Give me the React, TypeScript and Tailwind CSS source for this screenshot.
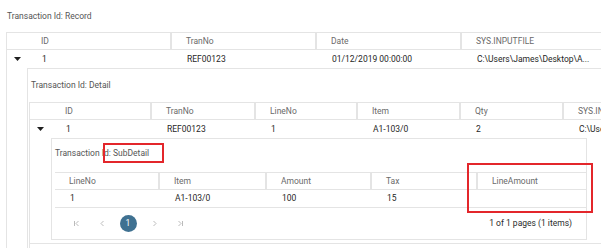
import React from "react"

const line = "border-[#e4e4e4]"

function CaretDown() {
  return (
    <svg width="7" height="4" viewBox="0 0 7 4">
      <path d="M0 0h7L3.5 4z" fill="#1f1f1f" />
    </svg>
  )
}

function CaretRight() {
  return (
    <svg width="4" height="7" viewBox="0 0 4 7">
      <path d="M0 0v7L4 3.5z" fill="#1f1f1f" />
    </svg>
  )
}

type Col = { w: string; label: string; value: string }

function HeaderRow({ cols, lead }: { cols: Col[]; lead?: string }) {
  return (
    <div className={`flex h-[18px] border-y ${line} text-[#6a6a6a]`}>
      {lead && <div className={lead} />}
      {cols.map((c, i) => (
        <div
          key={i}
          className={`${c.w} shrink-0 flex items-center pl-[14px] whitespace-nowrap overflow-hidden ${
            i < cols.length - 1 ? `border-r-2 ${line}` : ""
          }`}
        >
          {c.label}
        </div>
      ))}
    </div>
  )
}

function DataRow({
  cols,
  lead,
  caret,
  border = true,
}: {
  cols: Col[]
  lead?: string
  caret?: React.ReactNode
  border?: boolean
}) {
  return (
    <div className={`flex h-[18px] text-[#262626] ${border ? `border-b ${line}` : ""}`}>
      {lead && <div className={`${lead} flex items-center justify-center`}>{caret}</div>}
      {cols.map((c, i) => (
        <div
          key={i}
          className={`${c.w} shrink-0 flex items-center pl-[15px] whitespace-nowrap overflow-hidden`}
        >
          {c.value}
        </div>
      ))}
    </div>
  )
}

const recordCols: Col[] = [
  { w: "w-[145px]", label: "ID", value: "1" },
  { w: "w-[145px]", label: "TranNo", value: "REF00123" },
  { w: "w-[145px]", label: "Date", value: "01/12/2019 00:00:00" },
  { w: "w-[145px]", label: "SYS.INPUTFILE", value: "C:\\Users\\James\\Desktop\\A..." },
]

const detailCols: Col[] = [
  { w: "w-[101px]", label: "ID", value: "1" },
  { w: "w-[104px]", label: "TranNo", value: "REF00123" },
  { w: "w-[102px]", label: "LineNo", value: "1" },
  { w: "w-[103px]", label: "Item", value: "A1-103/0" },
  { w: "w-[103px]", label: "Qty", value: "2" },
  { w: "w-[103px]", label: "SYS.INPUTFILE", value: "C:\\Users\\James" },
]

const detailCols2: Col[] = [
  { w: "w-[101px]", label: "", value: "1" },
  { w: "w-[104px]", label: "", value: "REF00123" },
  { w: "w-[102px]", label: "", value: "2" },
  { w: "w-[103px]", label: "", value: "A1-101/0" },
  { w: "w-[103px]", label: "", value: "1" },
  { w: "w-[103px]", label: "", value: "C:\\Users\\James" },
]

const subCols: Col[] = [
  { w: "w-[105px]", label: "LineNo", value: "1" },
  { w: "w-[107px]", label: "Item", value: "A1-103/0" },
  { w: "w-[105px]", label: "Amount", value: "100" },
  { w: "w-[106px]", label: "Tax", value: "15" },
  { w: "w-[108px]", label: "LineAmount", value: "" },
]

function PagerIcon({ d }: { d: string }) {
  return (
    <svg width="7" height="7" viewBox="0 0 7 7">
      <path d={d} fill="none" stroke="#b3b3b3" strokeWidth="0.9" />
    </svg>
  )
}

function Pager() {
  return (
    <div className="flex h-[31px] items-center justify-between pl-[8px] pr-[14px]">
      <div className="flex items-center">
        <div className="w-[26px] flex justify-center">
          <PagerIcon d="M1.5 1v5M5.5 1L3 3.5 5.5 6" />
        </div>
        <div className="w-[26px] flex justify-center">
          <PagerIcon d="M4.5 1L2 3.5 4.5 6" />
        </div>
        <div className="w-[26px] flex justify-center">
          <div className="w-[17px] h-[17px] rounded-full bg-[#3f7191] text-white flex items-center justify-center">
            1
          </div>
        </div>
        <div className="w-[26px] flex justify-center">
          <PagerIcon d="M2.5 1L5 3.5 2.5 6" />
        </div>
        <div className="w-[26px] flex justify-center">
          <PagerIcon d="M1.5 1L4 3.5 1.5 6M5.5 1v5" />
        </div>
      </div>
      <div className="text-[#2a2a2a]">1 of 1 pages (1 items)</div>
    </div>
  )
}

export default function App() {
  return (
    <div className="relative w-[601px] h-[248px] overflow-hidden bg-white font-['Roboto',sans-serif] text-[8.5px]">
      <div className="h-[32px] flex items-center pl-[7px] text-[#555]">Transaction Id: Record</div>

      <div className={`ml-[6px] border-l ${line}`}>
        <HeaderRow cols={recordCols} lead="w-[20px] shrink-0" />
        <DataRow cols={recordCols} lead="w-[20px] shrink-0" caret={<CaretDown />} border={false} />

        <div className="flex">
          <div className="w-[20px] shrink-0" />
          <div className={`flex-1 border-l border-t ${line}`}>
            <div className="h-[33px] flex items-center pl-[3px] text-[#555]">Transaction Id: Detail</div>

            <div className={`ml-[1px] border-l ${line}`}>
              <HeaderRow cols={detailCols} lead="w-[21px] shrink-0" />
              <DataRow cols={detailCols} lead="w-[21px] shrink-0" caret={<CaretDown />} border={false} />

              <div className="flex">
                <div className="w-[21px] shrink-0" />
                <div className={`w-[536px] border ${line} mb-[3px]`}>
                  <div className="h-[33px] flex items-center pb-[4px] pl-[3px] text-[#555] whitespace-nowrap">
                    Transaction Id: SubDetail
                  </div>
                  <div className="ml-[3px]">
                    <HeaderRow cols={subCols} />
                    <DataRow cols={subCols} />
                    <Pager />
                  </div>
                </div>
              </div>

              <div className={`border-t ${line}`}>
                <DataRow cols={detailCols2} lead="w-[21px] shrink-0" caret={<CaretRight />} border={false} />
              </div>
            </div>
          </div>
        </div>
      </div>

      {/* annotation boxes */}
      <div className="absolute left-[103px] top-[143px] w-[61px] h-[20px] border-2 border-[#e3262b]" />
      <div className="absolute left-[467px] top-[163px] w-[126px] h-[50px] border-2 border-[#e3262b]" />
    </div>
  )
}
